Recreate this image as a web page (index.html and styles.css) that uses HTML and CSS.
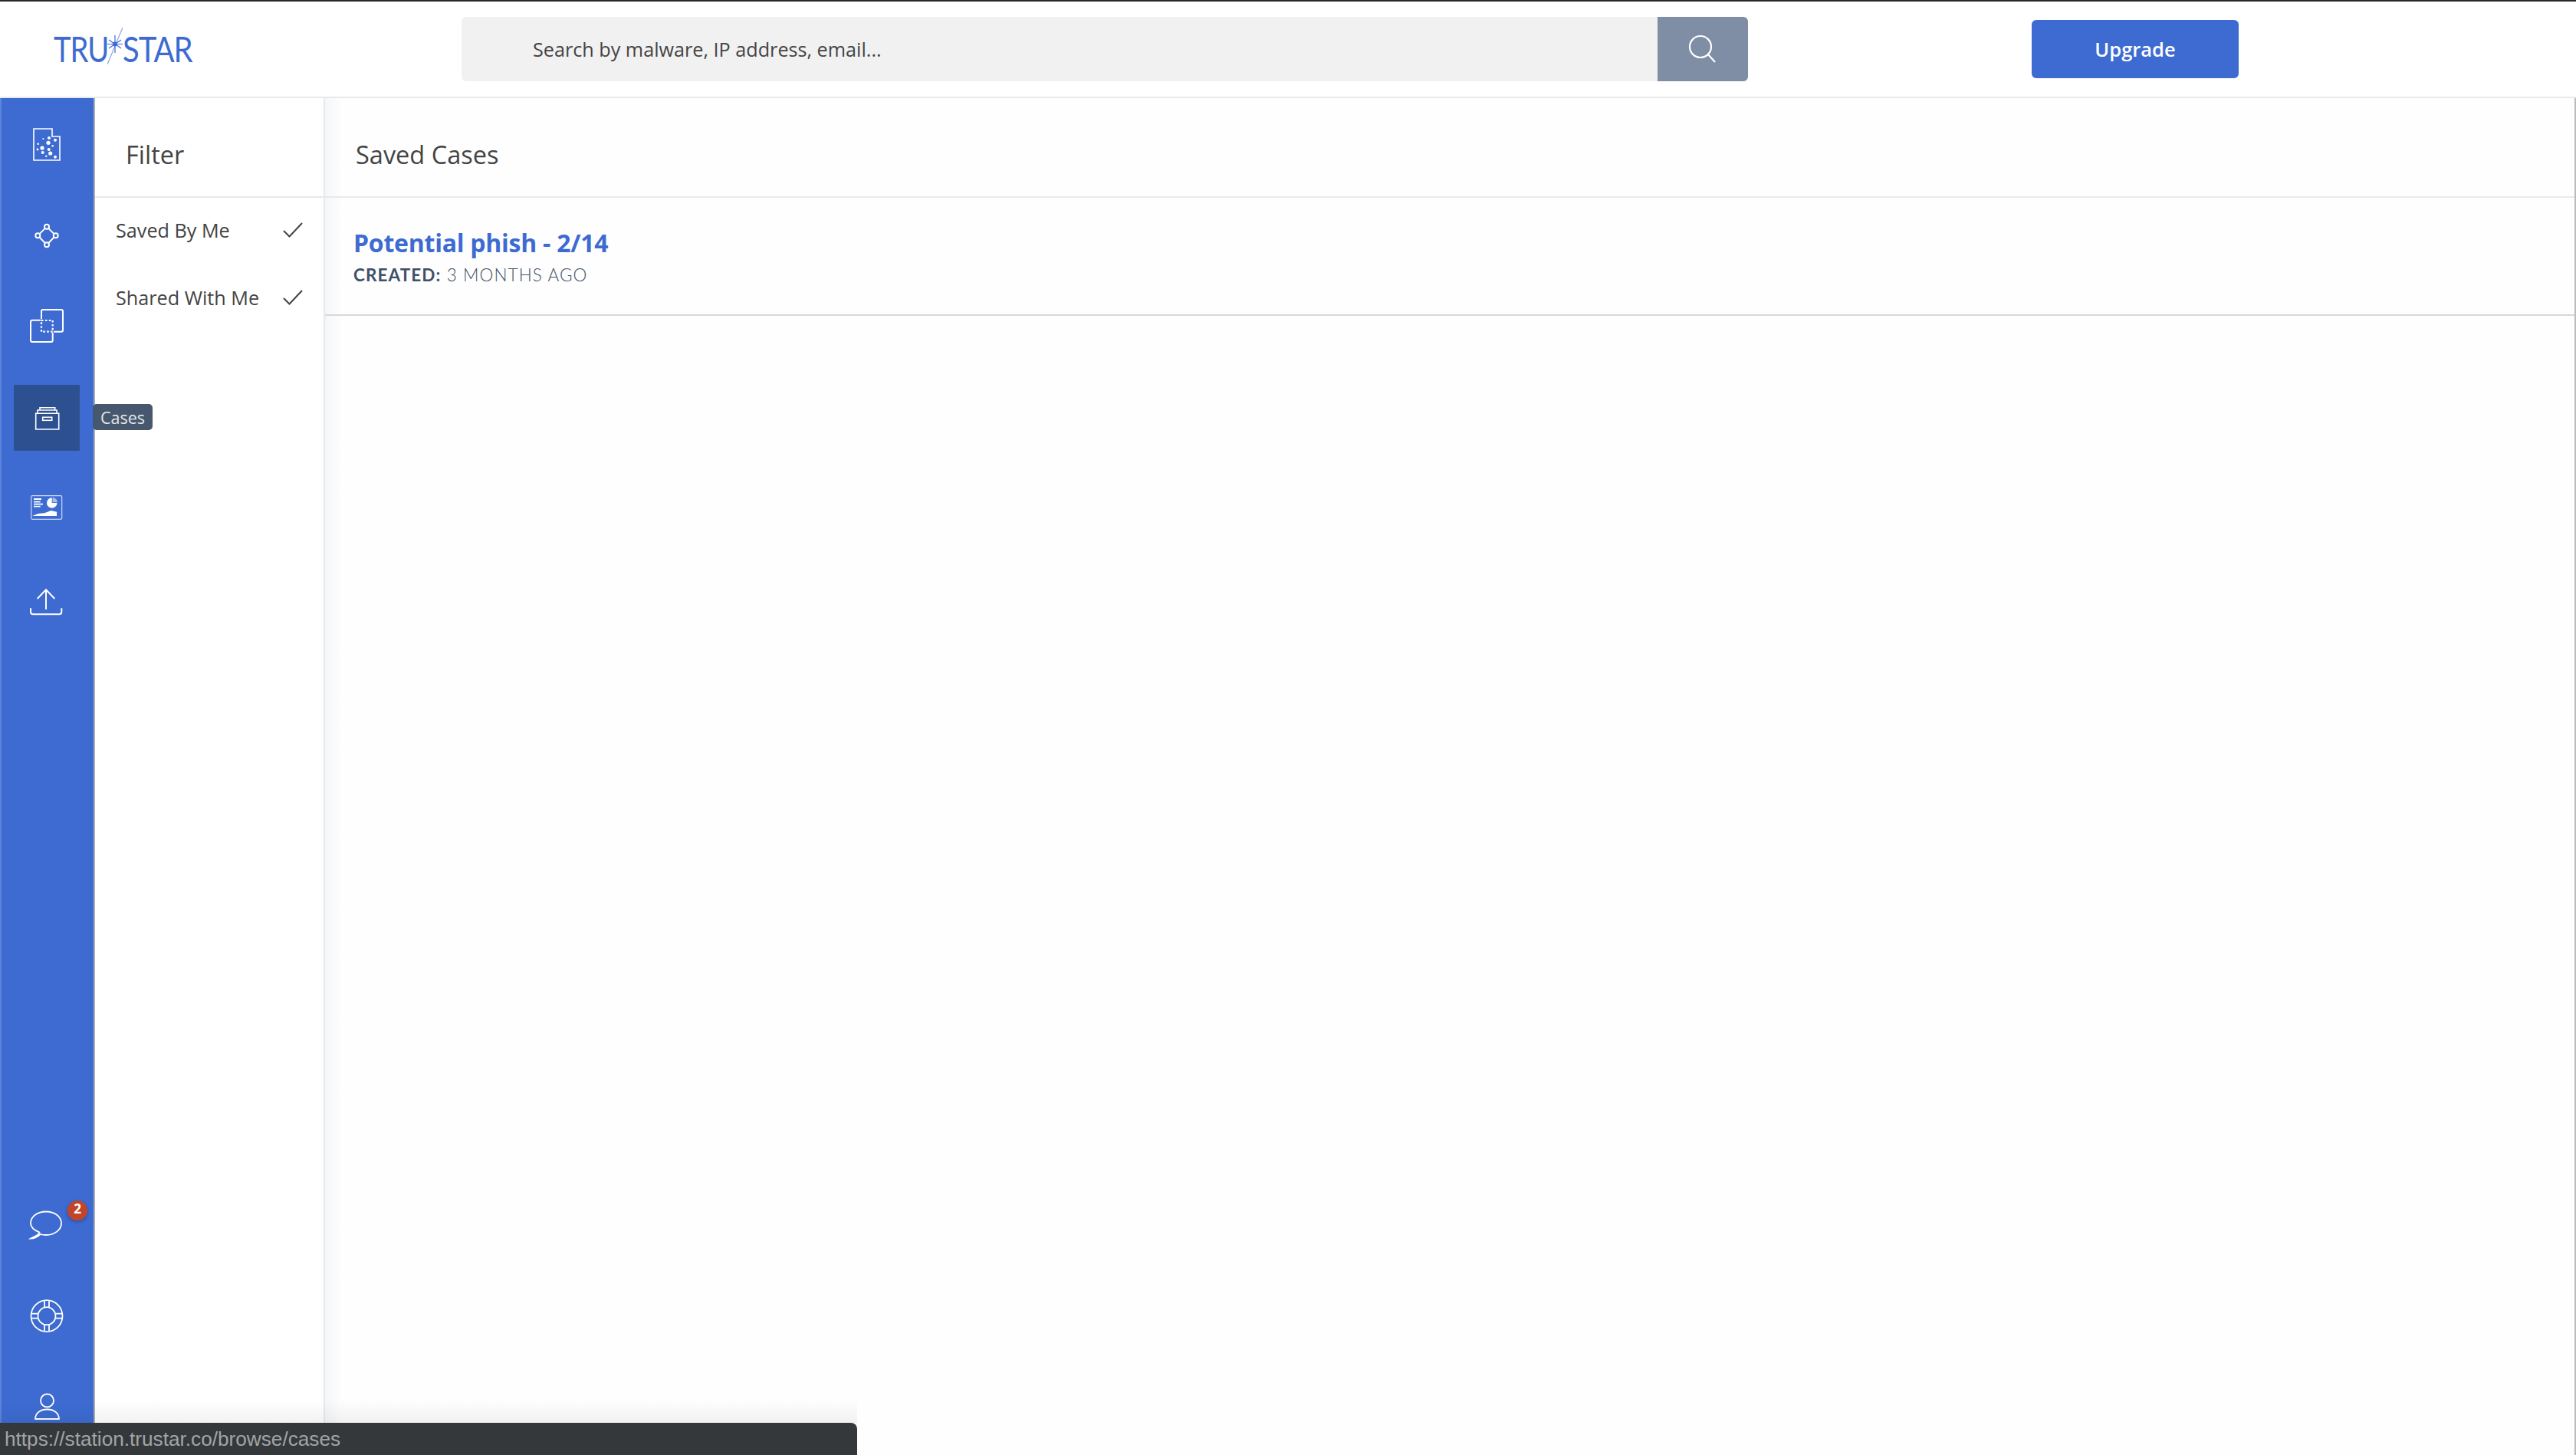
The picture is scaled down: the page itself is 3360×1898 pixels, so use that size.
FILE: index.html
```html
<!DOCTYPE html>
<html lang="en">
<head>
<meta charset="utf-8">
<title>Saved Cases</title>
<link rel="stylesheet" href="styles.css">
</head>
<body>
<div class="app">
  <header class="topbar">
    <a class="logo">
      <span class="logo-text logo-tru">TRU</span>
      <svg class="logo-star" width="20" height="48" viewBox="2 0 20 48">
        <path class="star-long" d="M22 0 L2 48"/>
        <path class="star-short" d="M4 16 L20 27 M20 16 L4 27 M12 10 L12 33 M2 21.500 L22 21.500"/>
        <circle class="star-core" cx="12" cy="21.500" r="3"/>
      </svg>
      <span class="logo-text logo-star-word">STAR</span>
    </a>
    <div class="search">
      <div class="search-input">Search by malware, IP address, email...</div>
      <div class="search-btn">
        <svg width="40" height="40" viewBox="0 0 40 40"><circle cx="18" cy="17" r="14"/><path d="M28 27 L37 37"/></svg>
      </div>
    </div>
    <button class="upgrade">Upgrade</button>
  </header>
  <div class="body">
    <nav class="sidebar">
      <div class="nav-top">
        <div class="nav-item">
          <svg class="ico" viewBox="0 0 86 86">
            <path d="M26 23 H50 V33 H60 V64 H26 Z"/>
            <g class="fill">
              <circle cx="46" cy="35" r="2"/><circle cx="45" cy="41.300" r="2.600"/><circle cx="54" cy="37.700" r="2"/><circle cx="38.300" cy="36" r="1"/>
              <circle cx="31.700" cy="42.700" r="1.300"/><circle cx="50.700" cy="45.300" r="1.300"/><circle cx="37" cy="48" r="2.600"/><circle cx="45.700" cy="50" r="2"/>
              <circle cx="37.700" cy="54" r="2"/><circle cx="47.700" cy="55" r="2.600"/><circle cx="42.300" cy="58.700" r="1.200"/><circle cx="54" cy="59.700" r="2"/><circle cx="31" cy="50" r="1.400"/>
            </g>
          </svg>
        </div>
        <div class="nav-item">
          <svg class="ico ico-bold" viewBox="0 0 86 86">
            <circle cx="43" cy="32.700" r="3"/><circle cx="31.300" cy="44.300" r="3"/><circle cx="54.700" cy="44.300" r="3"/><circle cx="43" cy="56.300" r="3"/>
            <path d="M40.800 34.900 L33.500 42.100 M45.200 34.900 L52.500 42.100 M33.500 46.500 L40.800 54.100 M52.500 46.500 L45.200 54.100"/>
          </svg>
        </div>
        <div class="nav-item">
          <svg class="ico ico-bold" viewBox="0 0 86 86">
            <path d="M36 35 V25 Q36 23 38 23 H62 Q64 23 64 25 V49.700 Q64 51.700 62 51.700 H52"/>
            <path d="M35 36.700 H24 Q22 36.700 22 38.700 V63 Q22 65 24 65 H48.700 Q50.700 65 50.700 63 V53"/>
            <rect class="dashed" x="36" y="37" width="14.700" height="14.700"/>
          </svg>
        </div>
        <div class="nav-item active">
          <svg class="ico" viewBox="0 0 86 86">
            <path d="M28.700 37.300 H58.700 V58 H28.700 Z"/>
            <path d="M31 37 V33 H56 V37 M34 33 V29.700 H53.700 V33"/>
            <rect x="37.700" y="42.300" width="12" height="4"/>
          </svg>
        </div>
        <div class="nav-item">
          <svg class="ico" viewBox="0 0 86 86">
            <rect class="faint" x="22.700" y="26.700" width="40" height="30.600" rx="1.500"/>
            <path class="bars" d="M26 31 H36 M26 34.700 H34.700 M26 37.700 H38 M26 40.700 H34.700"/>
            <path class="fill" d="M49.700 29.300 A6.700 6.700 0 1 0 56.400 36 H49.700 Z"/>
            <path class="fill-soft" d="M50.500 29 A6.700 6.700 0 0 1 57 35.200 H50.500 Z"/>
            <path class="fill" d="M24.700 52.700 L32 50 L40 49.300 L48.700 46 L56 47.700 V53 H24.700 Z"/>
          </svg>
        </div>
        <div class="nav-item">
          <svg class="ico ico-bold" viewBox="0 0 86 86">
            <path d="M42 31.300 V57 M30.700 43 L42 31.300 L53.300 43"/>
            <path d="M22 55.300 V60.300 Q22 63.300 25 63.300 H59.300 Q62.300 63.300 62.300 60.300 V55.300"/>
          </svg>
        </div>
      </div>
      <div class="nav-bottom">
        <div class="nav-item">
          <svg class="ico ico-mid" viewBox="0 0 86 86">
            <path d="M33.500 52.500 C26 49.500 22 45.500 22 40.700 C22 32 31 25.500 42 25.500 C53 25.500 62 32 62 40.700 C62 49.500 53 56 42 56 C39.500 56 37 55.700 34.500 55 C31.500 58 27 60.500 22 60.500 C25.500 58.500 32 57 33.500 52.500 Z"/>
          </svg>
          <span class="badge">2</span>
        </div>
        <div class="nav-item">
          <svg class="ico ico-mid" viewBox="0 0 86 86">
            <circle cx="43" cy="43.700" r="20.500"/>
            <circle cx="43" cy="43.700" r="11.500"/>
            <path d="M40 24 V32.500 M46 24 V32.500 M40 55 V63.500 M46 55 V63.500 M23 40.700 H31.500 M23 46.700 H31.500 M54.500 40.700 H63 M54.500 46.700 H63"/>
          </svg>
        </div>
        <div class="nav-item">
          <svg class="ico ico-mid" viewBox="0 0 86 86">
            <circle cx="43.500" cy="36" r="8.500"/>
            <path d="M28 60 C28 52 35 47.500 43.500 47.500 C52 47.500 59 52 59 60 Z" stroke-linejoin="round"/>
          </svg>
        </div>
      </div>
      <span class="tooltip">Cases</span>
    </nav>
    <aside class="filter">
      <h2 class="panel-title">Filter</h2>
      <ul class="filter-list">
        <li class="filter-item"><span>Saved By Me</span><svg class="check" width="26" height="20" viewBox="0 0 26 20"><path d="M1 11 L8.500 18.500 L25 1"/></svg></li>
        <li class="filter-item"><span>Shared With Me</span><svg class="check" width="26" height="20" viewBox="0 0 26 20"><path d="M1 11 L8.500 18.500 L25 1"/></svg></li>
      </ul>
    </aside>
    <main class="main">
      <h2 class="main-title">Saved Cases</h2>
      <article class="case">
        <a class="case-title">Potential phish - 2/14</a>
        <p class="case-meta"><b>CREATED:</b> 3 MONTHS AGO</p>
      </article>
    </main>
  </div>
  <div class="status">https://station.trustar.co/browse/cases</div>
</div>
</body>
</html>
```
FILE: styles.css
```css
* { box-sizing: border-box; }
html, body { margin: 0; padding: 0; height: 100%; background: #fff; overflow: hidden; }
body { font-family: "Open Sans", "Noto Sans", sans-serif; color: #444; }
h2, p, ul { margin: 0; padding: 0; }
ul { list-style: none; }

.app { position: relative; display: flex; flex-direction: column; height: 1898px; width: 3360px; }

.topbar {
  display: flex; align-items: center; height: 128px; flex: none;
  border-top: 2px solid #24292e; border-bottom: 2px solid #e6eaee;
  padding-left: 70px; background: #fff;
}
.logo { display: flex; align-items: center; width: 182px; height: 60px; color: #3d6bd1; }
.logo-text {
  display: block; flex: none; font-family: "Lato", sans-serif; font-weight: 400; font-size: 46px; line-height: 60px;
  letter-spacing: -1.2px; transform-origin: left center; white-space: nowrap;
}
.logo-tru { width: 70px; transform: scaleX(.83); }
.logo-star-word { width: 92px; transform: scaleX(.87); }
.logo-star { flex: none; margin-top: -8px; }
.star-long { stroke: #8aa6e3; stroke-width: 1.200; fill: none; }
.star-short { stroke: #3d6bd1; stroke-width: 1.200; fill: none; }
.star-core { fill: #3d6bd1; }

.search { display: flex; width: 1678px; height: 84px; margin-left: 350px; }
.search-input {
  flex: 1; background: #f1f1f1; border-radius: 6px 0 0 6px; padding-left: 93px;
  font-size: 25.2px; line-height: 84px; color: #444;
}
.search-btn {
  width: 118px; background: #7f8da5; border-radius: 0 6px 6px 0;
  display: flex; align-items: center; justify-content: center; padding-right: 2px;
}
.search-btn svg { fill: none; stroke: #fff; stroke-width: 2.200; }
.upgrade {
  width: 270px; height: 76px; margin-left: 370px; border: 0; border-radius: 6px;
  background: #3d6bd1; color: #fff; font: 600 25.5px "Open Sans", sans-serif;
}

.body { flex: 1; display: flex; min-height: 0; }

.sidebar {
  position: relative; width: 124px; flex: none; display: flex; flex-direction: column; justify-content: space-between;
  background: #3d6bd1; border-left: 2px solid #5c84dc; border-right: 2px solid #aaadb3;
  padding: 17px 0 21px 16px;
}
.nav-top, .nav-bottom { display: flex; flex-direction: column; gap: 32px; }
.nav-item { position: relative; width: 86px; height: 86px; }
.nav-item.active { background: #2d5190; margin-top: 3px; }
.ico { display: block; width: 86px; height: 86px; fill: none; stroke: #fff; stroke-width: 1.600; }
.ico-bold { stroke-width: 2; }
.ico-mid { stroke-width: 1.800; }
.ico .fill { fill: #fff; stroke: none; }
.ico .fill-soft { fill: #a9bdec; stroke: none; }
.ico .faint { stroke: #cfdaf4; stroke-width: 1.200; }
.ico .bars { stroke-width: 1.800; }
.ico .dashed { stroke-dasharray: 2.600 2.300; stroke-width: 2.200; }

.badge {
  position: absolute; left: 70px; top: 11px; width: 26px; height: 26px; border-radius: 50%;
  background: #c2452a; color: #fff; font-size: 17px; font-weight: 700; line-height: 21px; text-align: center;
  box-shadow: 0 2px 5px rgba(0, 0, 0, .25);
}
.tooltip {
  position: absolute; left: 119px; top: 399px; width: 78px; height: 34px; z-index: 3;
  background: #47586e; border-radius: 5px; color: #e3e7ec; font-size: 21.5px; line-height: 35px; text-align: center;
}

.filter { width: 300px; flex: none; border-right: 2px solid #e6eaee; background: #fff; }
.panel-title {
  height: 130px; border-bottom: 2px solid #e6eaee; padding: 18px 0 0 40px;
  display: flex; align-items: center;
  font-size: 32.5px; font-weight: 400; color: #444;
}
.filter-list { margin-top: -2px; }
.filter-item {
  display: flex; align-items: center; justify-content: space-between; height: 88px;
  padding: 0 27px 0 27px; font-size: 25.2px; color: #444;
}
.check { fill: none; stroke: #444; stroke-width: 2; }

.main {
  flex: 1; border-right: 2px solid #bcbcbc; background: linear-gradient(to right, #f5f6f7, #fefefe 22px);
}
.main-title {
  height: 130px; border-bottom: 2px solid #e6eaee; padding: 18px 0 0 40px;
  display: flex; align-items: center;
  font-size: 32.5px; font-weight: 400; color: #444;
}
.case { height: 154px; border-bottom: 2px solid #d8d8d8; padding: 37px 0 0 37px; }
.case-title { display: block; font-size: 32px; font-weight: 700; line-height: 44px; letter-spacing: -.25px; color: #3d6bd1; }
.case-meta {
  font-family: "Lato", sans-serif; font-weight: 300; font-size: 22.5px; line-height: 34px; margin-top: 3px;
  letter-spacing: 1.100px; color: #3f5068;
}
.case-meta b { font-weight: 700; }

.status {
  position: absolute; left: 0; bottom: 0; width: 1118px; height: 42px; z-index: 4;
  background: #35383b; border-radius: 0 8px 0 0; padding-left: 6px;
  font-family: "Liberation Sans", sans-serif; font-size: 26.2px; line-height: 42px; color: #a2a4a6;
}
.status::before {
  content: ""; position: absolute; left: 0; right: 0; top: -30px; height: 30px;
  background: linear-gradient(to bottom, rgba(0, 0, 0, 0), rgba(0, 0, 0, .05));
}
```
